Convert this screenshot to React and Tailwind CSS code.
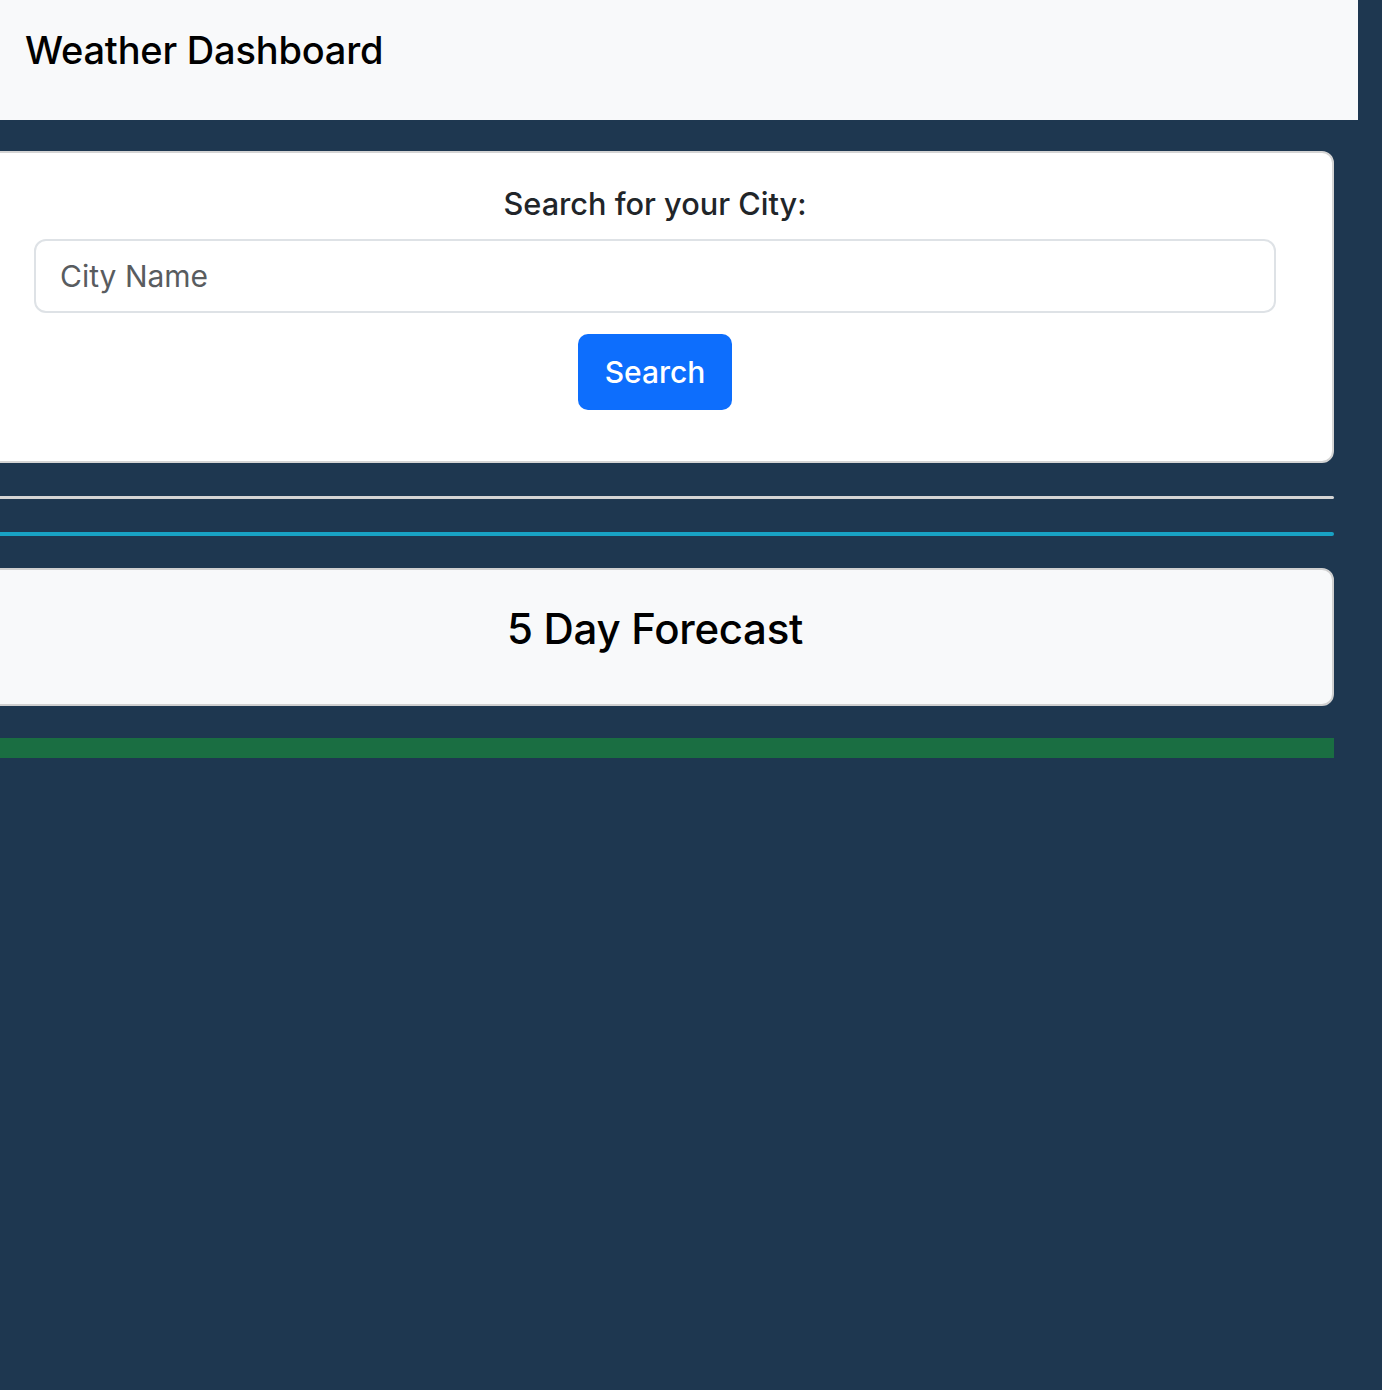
export default function App() {
  return (
    <div
      className="min-h-screen w-full overflow-hidden bg-[#1e3750]"
      style={{ fontFamily: "Inter, 'Noto Sans', sans-serif" }}
    >
      {/* Navbar */}
      <nav className="w-[1358px] h-[120px] bg-[#f8f9fa] flex items-center px-[25px] pb-[20px]">
        <span className="text-[38px] font-medium text-black tracking-[-0.2px]">
          Weather Dashboard
        </span>
      </nav>

      {/* Main content */}
      <main className="-ml-[24px] w-[1358px] pt-[31px]">
        {/* Search card */}
        <section className="bg-white border-2 border-[#d4d4d4] rounded-[12px] px-[56px] pt-[30px] pb-[51px] flex flex-col items-center">
          <label className="text-[30.7px] leading-[42px] font-medium text-[#212529]">
            Search for your City:
          </label>
          <input
            type="text"
            placeholder="City Name"
            className="mt-[14px] w-full h-[74px] rounded-[12px] border-2 border-[#dee2e6] bg-white px-[24px] text-[30px] text-[#212529] placeholder:text-[#595c5f] outline-none"
          />
          <button className="mt-[21px] w-[154px] h-[76px] rounded-[10px] bg-[#0d6efd] text-white text-[30px] font-medium">
            Search
          </button>
        </section>

        <div className="mt-[33px] h-[3px] bg-[#d4d4d4] rounded-full" />
        <div className="mt-[33px] h-[4px] bg-[#18a2c4] rounded-full" />

        {/* Forecast header */}
        <section className="mt-[32px] h-[138px] bg-[#f8f9fa] border-2 border-[#cfcfcf] rounded-[12px] flex items-center justify-center pb-[18px]">
          <h2 className="text-[42px] font-medium text-black tracking-[-0.3px]">
            5 Day Forecast
          </h2>
        </section>

        <div className="mt-[32px] h-[20px] bg-[#1a6e42]" />
      </main>
    </div>
  );
}
